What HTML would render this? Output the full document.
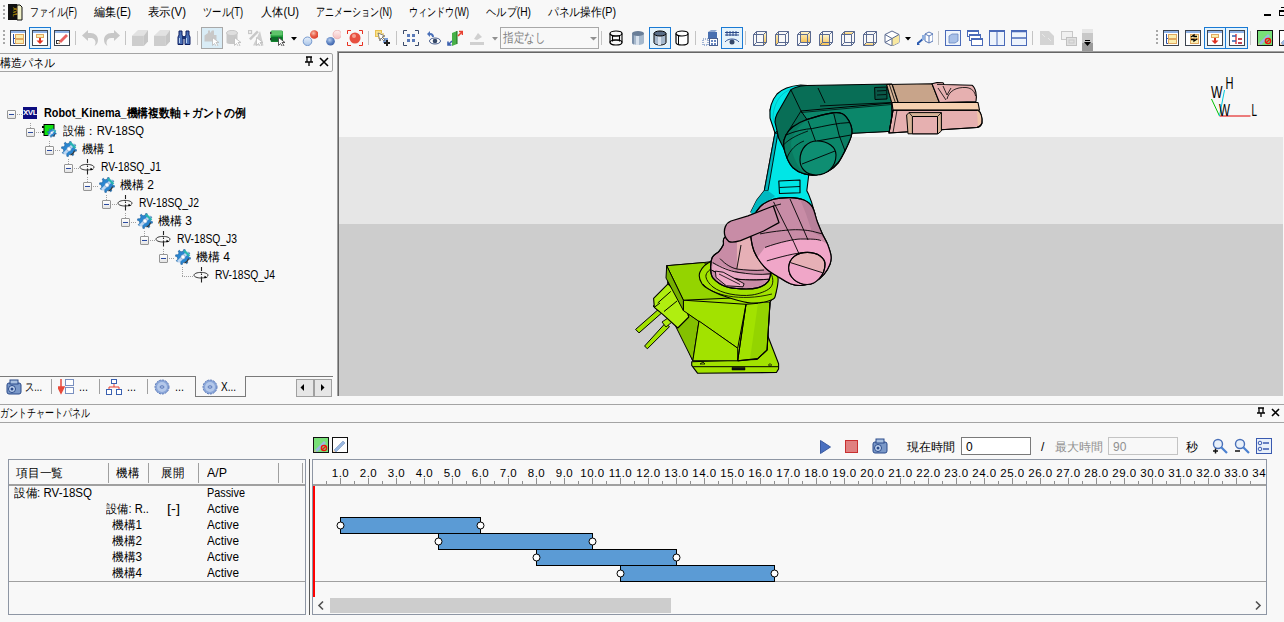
<!DOCTYPE html>
<html><head><meta charset="utf-8"><style>
*{box-sizing:border-box}
html,body{margin:0;padding:0}
body{width:1284px;height:622px;background:#f8f8f8;position:relative;overflow:hidden;font-family:"Liberation Sans",sans-serif;font-size:12px;color:#000}
.a{position:absolute}
.t{position:absolute;white-space:nowrap;line-height:14px;font-size:12px}
.fit{transform-origin:0 50%}
.sep{position:absolute;top:31px;width:1px;height:14px;background:#c4c4c4}
.hl{position:absolute;height:1px;background:#a0a0a0}
.vl{position:absolute;width:1px;background:#a0a0a0}
.dot{position:absolute;width:2px;height:2px;background:#a8a8a8}
</style></head><body>
<div class="dot" style="left:3px;top:5px"></div>
<div class="dot" style="left:3px;top:9px"></div>
<div class="dot" style="left:3px;top:13px"></div>
<div class="dot" style="left:3px;top:17px"></div>
<svg class="a" style="left:8px;top:4px" width="15" height="17" viewBox="0 0 15 17"><rect x="0" y="0" width="9" height="16" fill="#111"/><path d="M9 1h3l2 2v13H9z" fill="#f0f0c8" stroke="#111" stroke-width="1"/><text x="4.5" y="8" font-size="5" fill="#f0c000" font-family="Liberation Sans" transform="rotate(90 4.5 8)" text-anchor="middle">XVL</text></svg>
<span class="t fit" style="left:30px;top:5px;width:47px;">ファイル(F)</span>
<span class="t fit" style="left:94px;top:5px;width:37px;">編集(E)</span>
<span class="t fit" style="left:148px;top:5px;width:38px;">表示(V)</span>
<span class="t fit" style="left:203px;top:5px;width:40px;">ツール(T)</span>
<span class="t fit" style="left:261px;top:5px;width:38px;">人体(U)</span>
<span class="t fit" style="left:316px;top:5px;width:76px;">アニメーション(N)</span>
<span class="t fit" style="left:409px;top:5px;width:60px;">ウィンドウ(W)</span>
<span class="t fit" style="left:486px;top:5px;width:45px;">ヘルプ(H)</span>
<span class="t fit" style="left:548px;top:5px;width:68px;">パネル操作(P)</span>
<div class="a" style="left:1264px;top:14px;width:7px;height:2px;background:#000"></div>
<div class="a" style="left:1279px;top:10px;width:8px;height:6px;border:1.5px solid #000;border-top-width:2px"></div>
<div class="a" style="left:1281px;top:7px;width:6px;height:2px;border-top:1.5px solid #000"></div>
<div class="dot" style="left:3px;top:30px"></div>
<div class="dot" style="left:3px;top:34px"></div>
<div class="dot" style="left:3px;top:38px"></div>
<div class="dot" style="left:3px;top:42px"></div>
<div class="dot" style="left:1156px;top:30px"></div>
<div class="dot" style="left:1156px;top:34px"></div>
<div class="dot" style="left:1156px;top:38px"></div>
<div class="dot" style="left:1156px;top:42px"></div>
<div class="a" style="left:29px;top:27px;width:22px;height:22px;border:1px solid #1a7ad4;background:#e5f3fb"></div>
<div class="a" style="left:201px;top:27px;width:22px;height:22px;border:1px solid #a8a8a8;background:#d9ecf6"></div>
<div class="a" style="left:649px;top:27px;width:22px;height:22px;border:1px solid #1a7ad4;background:#e5f3fb"></div>
<div class="a" style="left:721px;top:27px;width:22px;height:22px;border:1px solid #1a7ad4;background:#e5f3fb"></div>
<div class="a" style="left:1204px;top:27px;width:22px;height:22px;border:1px solid #1a7ad4;background:#e5f3fb"></div>
<div class="a" style="left:1225px;top:27px;width:23px;height:22px;border:1px solid #1a7ad4;background:#e5f3fb"></div>
<div class="sep" style="left:75px"></div>
<div class="sep" style="left:125px"></div>
<div class="sep" style="left:197px"></div>
<div class="sep" style="left:368px"></div>
<div class="sep" style="left:396px"></div>
<div class="sep" style="left:601px"></div>
<div class="sep" style="left:695px"></div>
<div class="sep" style="left:745px"></div>
<div class="sep" style="left:938px"></div>
<div class="sep" style="left:1032px"></div>
<div class="sep" style="left:1250px"></div>
<svg class="a" style="left:10px;top:30px" width="16" height="16" viewBox="0 0 16 16"><rect x="0.5" y="0.5" width="15" height="15" fill="#fff" stroke="#3c4450"/><rect x="1" y="1" width="14" height="2" fill="#8fb2e6"/><path d="M3.5 4v9.5h2M3.5 8.5h2" stroke="#2a4fa0" fill="none"/><rect x="5.5" y="4.5" width="8" height="4" fill="#fbeeb0" stroke="#e0a860"/><rect x="5.5" y="9.5" width="8" height="4" fill="#fbeeb0" stroke="#e0a860"/></svg>
<svg class="a" style="left:32px;top:30px" width="16" height="16" viewBox="0 0 16 16"><rect x="0.5" y="0.5" width="15" height="15" fill="#fff" stroke="#3c4450"/><rect x="1" y="1" width="14" height="2" fill="#8fb2e6"/><rect x="4.5" y="4.5" width="7" height="3" fill="#fbeeb0" stroke="#e0a860"/><path d="M7 8h2v2.5h2.5L8 14 4.5 10.5H7z" fill="#e03020"/></svg>
<svg class="a" style="left:54px;top:30px" width="16" height="16" viewBox="0 0 16 16"><rect x="0.5" y="0.5" width="15" height="15" fill="#fff" stroke="#3c4450"/><rect x="1" y="1" width="14" height="2" fill="#8fb2e6"/><rect x="2.5" y="10.5" width="3" height="3" fill="#fff" stroke="#333"/><path d="M5 11l7-7 2 2-7 7z" fill="#e86060"/><path d="M5 11l-1 3 3-1z" fill="#f0c090"/></svg>
<svg class="a" style="left:82px;top:30px" width="16" height="16" viewBox="0 0 16 16"><path d="M0 5.5L6 0v3h2.5C13 3 16 6 16 10c0 3-1.5 5-3.5 6 .8-1.5 1-2.5 1-3.5 0-2.5-2-4.5-5-4.5H6v3z" fill="#c8c8c8"/></svg>
<svg class="a" style="left:104px;top:30px" width="16" height="16" viewBox="0 0 16 16"><path d="M16 5.5L10 0v3H7.5C3 3 0 6 0 10c0 3 1.5 5 3.5 6-.8-1.5-1-2.5-1-3.5 0-2.5 2-4.5 5-4.5H10v3z" fill="#c8c8c8"/></svg>
<svg class="a" style="left:132px;top:30px" width="16" height="16" viewBox="0 0 16 16"><path d="M0 5.7L6 0h10l-4.2 5.7z" fill="#e2e2e2"/><rect x="0" y="5.7" width="11.8" height="10.3" fill="#cdcdcd"/><path d="M11.8 5.7L16 0v11.5L11.8 16z" fill="#c6c6c6"/></svg>
<svg class="a" style="left:154px;top:30px" width="16" height="16" viewBox="0 0 16 16"><path d="M0 5.7L6 0h10l-4.2 5.7z" fill="#e2e2e2"/><rect x="0" y="5.7" width="11.8" height="10.3" fill="#cdcdcd"/><path d="M11.8 5.7L16 0v11.5L11.8 16z" fill="#c6c6c6"/></svg>
<svg class="a" style="left:176px;top:30px" width="16" height="16" viewBox="0 0 16 16"><path d="M2 14.5V7l1-2V1h3v4l1 2v7.5zM9 14.5V7l1-2V1h3v4l1 2v7.5z" fill="#4a6fb5" stroke="#0e1f60" stroke-width="1"/><rect x="6" y="6" width="4" height="3" fill="#1a3070"/><path d="M3.5 8v5M10.5 8v5" stroke="#b8d0f0"/></svg>
<svg class="a" style="left:204px;top:30px" width="16" height="16" viewBox="0 0 16 16"><path d="M0.5 5.5L4 3V0.5h2V3l2-2.5h2V5h2.5v6.5H.5z" fill="#c8c8c8"/><path d="M8.5 7.5v8l2-2 2 3 1.5-1-2-3h3z" fill="#fff" stroke="#c0c0c0" stroke-width=".9"/></svg>
<svg class="a" style="left:226px;top:30px" width="16" height="16" viewBox="0 0 16 16"><path d="M0.5 3v9.5c0 1 2.5 1.5 5.5 1.5s5.5-.5 5.5-1.5V3" fill="#c8c8c8"/><ellipse cx="6" cy="3" rx="5.5" ry="2.6" fill="#dedede" stroke="#c8c8c8"/><path d="M8.5 7.5v8l2-2 2 3 1.5-1-2-3h3z" fill="#fff" stroke="#c0c0c0" stroke-width=".9"/></svg>
<svg class="a" style="left:248px;top:30px" width="16" height="16" viewBox="0 0 16 16"><rect x="0.5" y="0.5" width="3" height="3" fill="none" stroke="#c8c8c8" stroke-width="1.3"/><path d="M1 8.5L9 .5l1.8 1.8-8 8z" fill="#c8c8c8"/><path d="M5 15.5L12 1l3.5 14.5z" fill="#d0d0d0"/><path d="M8.5 7.5v8l2-2 2 3 1.5-1-2-3h3z" fill="#fff" stroke="#c0c0c0" stroke-width=".9"/></svg>
<svg class="a" style="left:270px;top:30px" width="16" height="16" viewBox="0 0 16 16"><rect x="0.5" y="0.5" width="12.5" height="11.5" rx="1.5" fill="#1e9a38"/><rect x="1" y="1" width="11.5" height="4.5" rx="1" fill="#5ec46a"/><rect x="1" y="7" width="11.5" height="4.5" fill="#0c6e28"/><path d="M0 3h1.5M0 9h1.5" stroke="#333" stroke-width="2"/><path d="M8.5 7.5v8l2-2 2 3 1.5-1-2-3h3z" fill="#fff" stroke="#444" stroke-width=".9"/></svg>
<svg class="a" style="left:302px;top:30px" width="16" height="16" viewBox="0 0 16 16"><defs><radialGradient id="rb" cx=".4" cy=".35" r=".7"><stop offset="0" stop-color="#f8c0b0"/><stop offset=".5" stop-color="#e8604a"/><stop offset="1" stop-color="#d83a2a"/></radialGradient><linearGradient id="bb" x1="0" y1="0" x2="0" y2="1"><stop offset="0" stop-color="#e8f0fa"/><stop offset="1" stop-color="#a8c4e8"/></linearGradient></defs><circle cx="12.3" cy="4.5" r="4.3" fill="url(#rb)"/><circle cx="5.5" cy="11.3" r="4.3" fill="url(#bb)" stroke="#6a90c8" stroke-width=".9"/></svg>
<svg class="a" style="left:325px;top:30px" width="16" height="16" viewBox="0 0 16 16"><defs><radialGradient id="bb2" cx=".4" cy=".35" r=".7"><stop offset="0" stop-color="#b8cff0"/><stop offset=".6" stop-color="#5a80c0"/><stop offset="1" stop-color="#3a5ea8"/></radialGradient><linearGradient id="rr2" x1="0" y1="0" x2="0" y2="1"><stop offset="0" stop-color="#fff0f0"/><stop offset="1" stop-color="#f4c0c0"/></linearGradient></defs><circle cx="12.3" cy="4.5" r="4.3" fill="url(#rr2)" stroke="#e8a8a8" stroke-width=".7"/><circle cx="5.5" cy="11.3" r="4.3" fill="url(#bb2)"/></svg>
<svg class="a" style="left:347px;top:30px" width="16" height="16" viewBox="0 0 16 16"><path d="M.5 4V.5H4M12 .5h3.5V4M15.5 12v3.5H12M4 15.5H.5V12" stroke="#e83020" fill="none"/><circle cx="8" cy="8" r="5.5" fill="#e85040"/><circle cx="7" cy="6" r="2" fill="#f5a090"/></svg>
<svg class="a" style="left:375px;top:30px" width="16" height="16" viewBox="0 0 16 16"><rect x="0.5" y="0.5" width="6" height="6" fill="#f8e08a" stroke="#e8c050"/><rect x="3" y="3" width="6" height="6" fill="#f0d890"/><rect x="8" y="8" width="5" height="5" fill="#7aa0d8"/><path d="M3 3l7 3-3 1 3 3-1 1-3-3-1 3z" fill="#fff" stroke="#555" stroke-width=".7"/><path d="M12 10v6M9 13h6" stroke="#222" stroke-width="2"/></svg>
<svg class="a" style="left:403px;top:30px" width="16" height="16" viewBox="0 0 16 16"><path d="M.5 4V.5H4M12 .5h3.5V4M15.5 12v3.5H12M4 15.5H.5V12" stroke="#3a4a6a" fill="none"/><g fill="#5a7ab8"><rect x="4" y="4" width="3" height="3"/><rect x="9" y="4" width="3" height="3"/><rect x="4" y="9" width="3" height="3"/><rect x="9" y="9" width="3" height="3"/></g></svg>
<svg class="a" style="left:425px;top:30px" width="16" height="16" viewBox="0 0 16 16"><path d="M2 4l3-3v2c3 0 4 2 4 4H7c0-1-.5-2-2-2v2z" fill="#4a70b8"/><ellipse cx="10" cy="11" rx="5.5" ry="3" fill="#fff" stroke="#4a6090"/><circle cx="10" cy="11" r="2.3" fill="#354868"/></svg>
<svg class="a" style="left:447px;top:30px" width="16" height="16" viewBox="0 0 16 16"><path d="M5 3l5-2v13l-5 2z" fill="#48b048"/><path d="M10 1v13" stroke="#1a6a1a"/><path d="M11 6l4-4M12 1.5h3.5V5" stroke="#e84030" stroke-width="1.6" fill="none"/><path d="M1 15l4-4M1 11.5V15h3.5" stroke="#3a60b0" stroke-width="1.6" fill="none"/></svg>
<svg class="a" style="left:469px;top:30px" width="16" height="16" viewBox="0 0 16 16"><path d="M5 9l4-6 4 4-5 3z" fill="#d0d0d0"/><rect x="1" y="12" width="14" height="3" fill="#d0d0d0"/></svg>
<svg class="a" style="left:609px;top:30px" width="16" height="16" viewBox="0 0 16 16"><ellipse cx="7" cy="3.5" rx="6" ry="2.5" fill="none" stroke="#000" stroke-width="1.2"/><ellipse cx="7" cy="12.5" rx="6" ry="2.5" fill="none" stroke="#000" stroke-width="1.2"/><path d="M1 3.5v9M13 3.5v9M3.5 5.5v6M10.5 5.5v6" stroke="#000" stroke-width="1.1"/><path d="M3 6h8M3 10h8" stroke="#000"/></svg>
<svg class="a" style="left:631px;top:30px" width="16" height="16" viewBox="0 0 16 16"><path d="M1 3.5v9c0 1.4 2.7 2.5 6 2.5s6-1.1 6-2.5v-9" fill="#a6b8cc"/><path d="M5 5.5v9.5h3V5.5z" fill="#d8e2ee"/><path d="M1 4v8.5c0 1 .8 1.6 2 2V5z" fill="#7a8ea8"/><ellipse cx="7" cy="3.5" rx="6" ry="2.5" fill="#6a7e98"/></svg>
<svg class="a" style="left:653px;top:30px" width="16" height="16" viewBox="0 0 16 16"><path d="M1 3.5v9c0 1.4 2.7 2.5 6 2.5s6-1.1 6-2.5v-9" fill="#a6b8cc" stroke="#000"/><path d="M5 5.5v9.5h3V5.5z" fill="#d8e2ee"/><ellipse cx="7" cy="3.5" rx="6" ry="2.5" fill="#5a6e88" stroke="#000"/></svg>
<svg class="a" style="left:675px;top:30px" width="16" height="16" viewBox="0 0 16 16"><path d="M1 3.5v9c0 1.4 2.7 2.5 6 2.5s6-1.1 6-2.5v-9" fill="#fff" stroke="#000" stroke-width="1.2"/><ellipse cx="7" cy="3.5" rx="6" ry="2.5" fill="#fff" stroke="#000" stroke-width="1.2"/><path d="M3.5 5.5v9" stroke="#000"/></svg>
<svg class="a" style="left:702px;top:30px" width="16" height="16" viewBox="0 0 16 16"><rect x="6" y="2" width="9" height="7" fill="#4a70b0"/><path d="M6 2l3-2h6l-2 2z" fill="#90a8d0"/><rect x="7.5" y="8.5" width="8" height="7" fill="#fff" stroke="#4a6090"/><path d="M9 10h2v2H9zM12 10h2v2h-2zM9 13h2v2H9zM12 13h2v2h-2z" fill="#6a88c0"/><path d="M1 9h5v6H1z" fill="none" stroke="#4a70b0" stroke-dasharray="1 1"/></svg>
<svg class="a" style="left:724px;top:30px" width="16" height="16" viewBox="0 0 16 16"><path d="M1 2.5h14M1 5h14M3 1v5M6 1v5M9 1v5M12 1v5" stroke="#2a4a8a" stroke-width="1"/><path d="M1 12c3-4 11-4 14 0" fill="none" stroke="#3a5a9a"/><circle cx="8" cy="12" r="2.5" fill="#354868"/></svg>
<svg class="a" style="left:752px;top:30px" width="16" height="16" viewBox="0 0 16 16"><defs><linearGradient id="yg" x1="0" y1="0" x2="0" y2="1"><stop offset="0" stop-color="#fff7d0"/><stop offset="1" stop-color="#f5c050"/></linearGradient></defs><path d="M11.5 4.5l3-3v11l-3 3z" fill="url(#yg)"/><path d="M1.5 4.5l3-3h10v11l-3 3h-10z" fill="none" stroke="#5a6a90"/><path d="M1.5 4.5h10v11M11.5 4.5l3-3" stroke="#5a6a90" fill="none"/><path d="M4.5 1.5v11h10M4.5 12.5l-3 3" stroke="#5a6a90" fill="none"/></svg>
<svg class="a" style="left:774px;top:30px" width="16" height="16" viewBox="0 0 16 16"><defs><linearGradient id="yg" x1="0" y1="0" x2="0" y2="1"><stop offset="0" stop-color="#fff7d0"/><stop offset="1" stop-color="#f5c050"/></linearGradient></defs><path d="M1.5 4.5l3-3v11l-3 3z" fill="url(#yg)"/><path d="M1.5 4.5l3-3h10v11l-3 3h-10z" fill="none" stroke="#5a6a90"/><path d="M1.5 4.5h10v11M11.5 4.5l3-3" stroke="#5a6a90" fill="none"/><path d="M4.5 1.5v11h10M4.5 12.5l-3 3" stroke="#5a6a90" fill="none"/></svg>
<svg class="a" style="left:796px;top:30px" width="16" height="16" viewBox="0 0 16 16"><defs><linearGradient id="yg" x1="0" y1="0" x2="0" y2="1"><stop offset="0" stop-color="#fff7d0"/><stop offset="1" stop-color="#f5c050"/></linearGradient></defs><rect x="4.5" y="1.5" width="10" height="11" fill="url(#yg)"/><path d="M1.5 4.5l3-3h10v11l-3 3h-10z" fill="none" stroke="#5a6a90"/><path d="M1.5 4.5h10v11M11.5 4.5l3-3" stroke="#5a6a90" fill="none"/><path d="M4.5 1.5v11h10M4.5 12.5l-3 3" stroke="#5a6a90" fill="none"/></svg>
<svg class="a" style="left:818px;top:30px" width="16" height="16" viewBox="0 0 16 16"><defs><linearGradient id="yg" x1="0" y1="0" x2="0" y2="1"><stop offset="0" stop-color="#fff7d0"/><stop offset="1" stop-color="#f5c050"/></linearGradient></defs><rect x="1.5" y="4.5" width="10" height="11" fill="url(#yg)"/><path d="M1.5 4.5l3-3h10v11l-3 3h-10z" fill="none" stroke="#5a6a90"/><path d="M1.5 4.5h10v11M11.5 4.5l3-3" stroke="#5a6a90" fill="none"/><path d="M4.5 1.5v11h10M4.5 12.5l-3 3" stroke="#5a6a90" fill="none"/></svg>
<svg class="a" style="left:840px;top:30px" width="16" height="16" viewBox="0 0 16 16"><defs><linearGradient id="yg" x1="0" y1="0" x2="0" y2="1"><stop offset="0" stop-color="#fff7d0"/><stop offset="1" stop-color="#f5c050"/></linearGradient></defs><path d="M1.5 4.5l3-3h10l-3 3z" fill="url(#yg)"/><path d="M1.5 4.5l3-3h10v11l-3 3h-10z" fill="none" stroke="#5a6a90"/><path d="M1.5 4.5h10v11M11.5 4.5l3-3" stroke="#5a6a90" fill="none"/><path d="M4.5 1.5v11h10M4.5 12.5l-3 3" stroke="#5a6a90" fill="none"/></svg>
<svg class="a" style="left:862px;top:30px" width="16" height="16" viewBox="0 0 16 16"><defs><linearGradient id="yg" x1="0" y1="0" x2="0" y2="1"><stop offset="0" stop-color="#fff7d0"/><stop offset="1" stop-color="#f5c050"/></linearGradient></defs><path d="M1.5 15.5l3-3h10l-3 3z" fill="url(#yg)"/><path d="M1.5 4.5l3-3h10v11l-3 3h-10z" fill="none" stroke="#5a6a90"/><path d="M1.5 4.5h10v11M11.5 4.5l3-3" stroke="#5a6a90" fill="none"/><path d="M4.5 1.5v11h10M4.5 12.5l-3 3" stroke="#5a6a90" fill="none"/></svg>
<svg class="a" style="left:884px;top:30px" width="16" height="16" viewBox="0 0 16 16"><path d="M8 1l7 3.5v8L8 16l-7-3.5v-8z" fill="#fff" stroke="#5a6a90"/><path d="M8 8.5l7-4v8L8 16z" fill="#f8e8a0"/><path d="M1 4.5l7 4 7-4M8 8.5V16M1 12.5l7-4" stroke="#5a6a90" fill="none"/></svg>
<svg class="a" style="left:917px;top:30px" width="16" height="16" viewBox="0 0 16 16"><path d="M8 4l4-2 4 2v7l-4 2-4-2z" fill="#fff" stroke="#5a7ab8"/><path d="M8 4l4 2 4-2M12 6v7" stroke="#5a7ab8" fill="none"/><path d="M0 14l7-6" stroke="#2a5ab0" stroke-width="2"/><path d="M3 15h-3v-3z" fill="#2a5ab0"/><rect x="5" y="5" width="3" height="5" fill="#90b0e0"/></svg>
<svg class="a" style="left:945px;top:30px" width="16" height="16" viewBox="0 0 16 16"><rect x="0.5" y="0.5" width="15" height="15" fill="#eef4fc" stroke="#4a6ab8"/><path d="M4 6l3-2h6v7l-3 2H4z" fill="#a8c0e8" stroke="#6a88c0" stroke-width=".8"/></svg>
<svg class="a" style="left:967px;top:30px" width="16" height="16" viewBox="0 0 16 16"><rect x="0.5" y="0.5" width="11" height="6" fill="#fff" stroke="#4a6ab8"/><rect x="2.5" y="4.5" width="11" height="6" fill="#fff" stroke="#4a6ab8"/><rect x="4.5" y="8.5" width="11" height="7" fill="#fff" stroke="#4a6ab8"/><path d="M1 1.5h10M3 5.5h10M5 9.5h10" stroke="#4a6ab8"/></svg>
<svg class="a" style="left:989px;top:30px" width="16" height="16" viewBox="0 0 16 16"><rect x="0.5" y="0.5" width="15" height="15" fill="#eef4fc" stroke="#4a6ab8"/><path d="M8 1v14M1 1.5h14" stroke="#4a6ab8"/></svg>
<svg class="a" style="left:1011px;top:30px" width="16" height="16" viewBox="0 0 16 16"><rect x="0.5" y="0.5" width="15" height="15" fill="#eef4fc" stroke="#4a6ab8"/><path d="M1 1.5h14M1 8h14" stroke="#4a6ab8" stroke-width="1.3"/></svg>
<svg class="a" style="left:1039px;top:30px" width="16" height="16" viewBox="0 0 16 16"><path d="M1 15V1h9l5 5v9z" fill="#d4d4d4"/><path d="M3 4l3 3M9 8l3 3" stroke="#e8e8e8"/></svg>
<svg class="a" style="left:1061px;top:30px" width="16" height="16" viewBox="0 0 16 16"><rect x="0.5" y="1.5" width="11" height="8" fill="#f0f0f0" stroke="#c8c8c8"/><rect x="5.5" y="7.5" width="10" height="8" fill="#e0e0e0" stroke="#c0c0c0"/><rect x="8" y="10" width="5" height="3" fill="none" stroke="#c8c8c8"/></svg>
<svg class="a" style="left:1163px;top:30px" width="16" height="16" viewBox="0 0 16 16"><rect x="0.5" y="0.5" width="15" height="15" fill="#fff" stroke="#3c4450"/><rect x="1" y="1" width="14" height="2" fill="#8fb2e6"/><path d="M3.5 4v9.5h2M3.5 8.5h2" stroke="#2a4fa0" fill="none"/><rect x="5.5" y="4.5" width="8" height="4" fill="#fbeeb0" stroke="#e0a860"/><rect x="5.5" y="9.5" width="8" height="4" fill="#fbeeb0" stroke="#e0a860"/></svg>
<svg class="a" style="left:1185px;top:30px" width="16" height="16" viewBox="0 0 16 16"><rect x="0.5" y="0.5" width="15" height="15" fill="#fff" stroke="#3c4450"/><rect x="1" y="1" width="14" height="2" fill="#8fb2e6"/><rect x="5.5" y="4.5" width="8" height="4" fill="#fbeeb0" stroke="#e0a860"/><rect x="5.5" y="9.5" width="8" height="4" fill="#fbeeb0" stroke="#e0a860"/><path d="M6 7l3-2v1.5h3M12 9l-3 2v-1.5H6" stroke="#000" stroke-width="1.3" fill="none"/></svg>
<svg class="a" style="left:1207px;top:30px" width="16" height="16" viewBox="0 0 16 16"><rect x="0.5" y="0.5" width="15" height="15" fill="#fff" stroke="#3c4450"/><rect x="1" y="1" width="14" height="2" fill="#8fb2e6"/><rect x="4.5" y="4.5" width="7" height="3" fill="#fbeeb0" stroke="#e0a860"/><path d="M7 8h2v2.5h2.5L8 14 4.5 10.5H7z" fill="#e03020"/></svg>
<svg class="a" style="left:1229px;top:30px" width="16" height="16" viewBox="0 0 16 16"><rect x="0.5" y="0.5" width="15" height="15" fill="#fff" stroke="#3c4450"/><rect x="1" y="1" width="14" height="2" fill="#8fb2e6"/><path d="M7 4v10" stroke="#e02020" stroke-width="1.3"/><path d="M3 6h4M9 9h4M3 11h4M9 13h4" stroke="#3060b0" stroke-width="1.3"/><path d="M9 9h4M9 13h4" stroke="#e03030" stroke-width="1.3"/></svg>
<svg class="a" style="left:1257px;top:30px" width="16" height="16" viewBox="0 0 16 16"><rect x="0.5" y="0.5" width="15" height="15" fill="#78e078" stroke="#111"/><path d="M2 13l9-9 2 2-9 9z" fill="#9ab8e0"/><path d="M2 13l-1 2 2-.5z" fill="#f0c090"/><circle cx="11" cy="11" r="2.6" fill="none" stroke="#f01010" stroke-width="1.4"/><path d="M9 13l4-4" stroke="#f01010" stroke-width="1.2"/></svg>
<svg class="a" style="left:1279px;top:30px" width="16" height="16" viewBox="0 0 16 16"><rect x="0.5" y="0.5" width="15" height="15" fill="#fff" stroke="#111"/><path d="M2 13l9-9 2 2-9 9z" fill="#9ab8e0" stroke="#6a88b8" stroke-width=".5"/><path d="M2 13l-1 2 2-.5z" fill="#f0c090"/></svg>
<svg class="a" style="left:291px;top:37px" width="6" height="4"><path d="M0 0h6L3 3.5z" fill="#000"/></svg>
<svg class="a" style="left:492px;top:37px" width="6" height="4"><path d="M0 0h6L3 3.5z" fill="#909090"/></svg>
<svg class="a" style="left:905px;top:37px" width="6" height="4"><path d="M0 0h6L3 3.5z" fill="#000"/></svg>
<div class="a" style="left:500px;top:27px;width:99px;height:22px;border:1px solid #a8a8a8;background:#f8f8f8"></div>
<span class="t fit" style="left:503px;top:31px;color:#808080;font-size:13px;width:42px;">指定なし</span>
<svg class="a" style="left:590px;top:37px" width="7" height="4"><path d="M0 0h7L3.5 3.5z" fill="#909090"/></svg>
<div class="a" style="left:1082px;top:29px;width:11px;height:22px;background:linear-gradient(#e6e6e6 0,#e6e6e6 4px,#c8c8c8 4px,#c8c8c8 14px,#9a9a9a 14px)"></div>
<svg class="a" style="left:1084px;top:40px" width="7" height="7"><path d="M1 .5h5" stroke="#000"/><path d="M0 2h7L3.5 6z" fill="#000"/></svg>
<div class="a" style="left:-2px;top:53px;width:335px;height:19px;border:1px solid #a4a4a4;border-radius:0 2px 2px 0"></div>
<span class="t fit" style="left:0px;top:56px;width:55px;">構造パネル</span>
<svg class="a" style="left:304px;top:56px" width="10" height="11" viewBox="0 0 10 11"><path d="M2 1h6M3 1v5h4V1M1 6h8M5 6v4" stroke="#000" stroke-width="1.3" fill="none"/></svg>
<svg class="a" style="left:319px;top:57px" width="10" height="10" viewBox="0 0 10 10"><path d="M1 1l8 8M9 1l-8 8" stroke="#000" stroke-width="1.6"/></svg>
<div class="a" style="left:7px;top:110px;width:9px;height:9px;border:1px solid #959595;border-radius:1px;background:linear-gradient(#fff,#e4e4e4)"></div>
<div class="a" style="left:9px;top:114px;width:5px;height:1px;background:#2a4aa0"></div>
<div class="a" style="left:17px;top:114px;width:5px;height:1px;background:repeating-linear-gradient(90deg,#a0a0a0 0 1px,transparent 1px 2px)"></div>
<div class="a" style="left:23px;top:107px;width:14px;height:12px;background:#0c0c80;color:#fff;font-size:8px;line-height:12px;text-align:center;font-weight:bold;letter-spacing:-.5px">XVL</div>
<span class="t fit" style="left:44px;top:106px;font-weight:bold;width:202px;">Robot_Kinema_機構複数軸＋ガントの例</span>
<div class="a" style="left:26px;top:128px;width:9px;height:9px;border:1px solid #959595;border-radius:1px;background:linear-gradient(#fff,#e4e4e4)"></div>
<div class="a" style="left:28px;top:132px;width:5px;height:1px;background:#2a4aa0"></div>
<div class="a" style="left:36px;top:132px;width:5px;height:1px;background:repeating-linear-gradient(90deg,#a0a0a0 0 1px,transparent 1px 2px)"></div>
<div class="a" style="left:30px;top:123px;width:1px;height:5px;background:repeating-linear-gradient(#a0a0a0 0 1px,transparent 1px 2px)"></div>
<svg class="a" style="left:42px;top:124px" width="15" height="14" viewBox="0 0 15 14"><rect x="2" y="0.5" width="10" height="11" fill="#10e010" stroke="#000"/><path d="M0 3h2M0 8h2" stroke="#000" stroke-width="2"/><g transform="translate(5 4) scale(.6)"><path d="M13.60,8.00 L15.57,8.72 L15.26,10.23 L13.17,10.14 L11.96,11.96 L12.84,13.86 L11.56,14.72 L10.14,13.17 L8.00,13.60 L7.28,15.57 L5.77,15.26 L5.86,13.17 L4.04,11.96 L2.14,12.84 L1.28,11.56 L2.83,10.14 L2.40,8.00 L0.43,7.28 L0.74,5.77 L2.83,5.86 L4.04,4.04 L3.16,2.14 L4.44,1.28 L5.86,2.83 L8.00,2.40 L8.72,0.43 L10.23,0.74 L10.14,2.83 L11.96,4.04 L13.86,3.16 L14.72,4.44 L13.17,5.86Z" fill="#2a86d0" stroke="#1a5a98" stroke-width=".6"/><path d="M3 13L13 3" stroke="#bcd6f2" stroke-width="3"/><path d="M9 1.5l5.5 5.5" stroke="#28b4b0" stroke-width="2.2"/><circle cx="8" cy="8" r="2.2" fill="#fff" stroke="#5a8ac0" stroke-width=".6"/><path d="M13.5 9.5a6 6 0 0 1-4 4.5" stroke="#333" stroke-width="1.2" fill="none"/></g></svg>
<span class="t fit" style="left:63px;top:124px;width:81px;">設備：RV-18SQ</span>
<div class="a" style="left:45px;top:146px;width:9px;height:9px;border:1px solid #959595;border-radius:1px;background:linear-gradient(#fff,#e4e4e4)"></div>
<div class="a" style="left:47px;top:150px;width:5px;height:1px;background:#2a4aa0"></div>
<div class="a" style="left:55px;top:150px;width:5px;height:1px;background:repeating-linear-gradient(90deg,#a0a0a0 0 1px,transparent 1px 2px)"></div>
<div class="a" style="left:49px;top:141px;width:1px;height:5px;background:repeating-linear-gradient(#a0a0a0 0 1px,transparent 1px 2px)"></div>
<svg class="a" style="left:61px;top:141px" width="16" height="16" viewBox="0 0 16 16"><path d="M13.60,8.00 L15.57,8.72 L15.26,10.23 L13.17,10.14 L11.96,11.96 L12.84,13.86 L11.56,14.72 L10.14,13.17 L8.00,13.60 L7.28,15.57 L5.77,15.26 L5.86,13.17 L4.04,11.96 L2.14,12.84 L1.28,11.56 L2.83,10.14 L2.40,8.00 L0.43,7.28 L0.74,5.77 L2.83,5.86 L4.04,4.04 L3.16,2.14 L4.44,1.28 L5.86,2.83 L8.00,2.40 L8.72,0.43 L10.23,0.74 L10.14,2.83 L11.96,4.04 L13.86,3.16 L14.72,4.44 L13.17,5.86Z" fill="#2a86d0" stroke="#1a5a98" stroke-width=".6"/><path d="M3 13L13 3" stroke="#bcd6f2" stroke-width="3"/><path d="M9 1.5l5.5 5.5" stroke="#28b4b0" stroke-width="2.2"/><circle cx="8" cy="8" r="2.2" fill="#fff" stroke="#5a8ac0" stroke-width=".6"/><path d="M13.5 9.5a6 6 0 0 1-4 4.5" stroke="#333" stroke-width="1.2" fill="none"/></svg>
<span class="t fit" style="left:82px;top:142px;width:32px;">機構 1</span>
<div class="a" style="left:64px;top:164px;width:9px;height:9px;border:1px solid #959595;border-radius:1px;background:linear-gradient(#fff,#e4e4e4)"></div>
<div class="a" style="left:66px;top:168px;width:5px;height:1px;background:#2a4aa0"></div>
<div class="a" style="left:74px;top:168px;width:5px;height:1px;background:repeating-linear-gradient(90deg,#a0a0a0 0 1px,transparent 1px 2px)"></div>
<div class="a" style="left:68px;top:159px;width:1px;height:5px;background:repeating-linear-gradient(#a0a0a0 0 1px,transparent 1px 2px)"></div>
<svg class="a" style="left:79px;top:159px" width="17" height="16" viewBox="0 0 17 16"><path d="M8.5 0v4M8.5 6.5v1.5M8.5 9.5v6" stroke="#222" stroke-width="1.1"/><path d="M12.5 10.3C11 10.8 9.8 11 8 11 4.2 11 1 9.8 1 8.2s3.2-2.8 7-2.8 7 1.2 7 2.8c0 .6-.4 1-1 1.4" fill="none" stroke="#333" stroke-width="1"/><path d="M11.5 8.8l3 1.6-3 1.2z" fill="#000"/></svg>
<span class="t fit" style="left:101px;top:160px;width:60px;">RV-18SQ_J1</span>
<div class="a" style="left:83px;top:182px;width:9px;height:9px;border:1px solid #959595;border-radius:1px;background:linear-gradient(#fff,#e4e4e4)"></div>
<div class="a" style="left:85px;top:186px;width:5px;height:1px;background:#2a4aa0"></div>
<div class="a" style="left:93px;top:186px;width:5px;height:1px;background:repeating-linear-gradient(90deg,#a0a0a0 0 1px,transparent 1px 2px)"></div>
<div class="a" style="left:87px;top:177px;width:1px;height:5px;background:repeating-linear-gradient(#a0a0a0 0 1px,transparent 1px 2px)"></div>
<svg class="a" style="left:99px;top:177px" width="16" height="16" viewBox="0 0 16 16"><path d="M13.60,8.00 L15.57,8.72 L15.26,10.23 L13.17,10.14 L11.96,11.96 L12.84,13.86 L11.56,14.72 L10.14,13.17 L8.00,13.60 L7.28,15.57 L5.77,15.26 L5.86,13.17 L4.04,11.96 L2.14,12.84 L1.28,11.56 L2.83,10.14 L2.40,8.00 L0.43,7.28 L0.74,5.77 L2.83,5.86 L4.04,4.04 L3.16,2.14 L4.44,1.28 L5.86,2.83 L8.00,2.40 L8.72,0.43 L10.23,0.74 L10.14,2.83 L11.96,4.04 L13.86,3.16 L14.72,4.44 L13.17,5.86Z" fill="#2a86d0" stroke="#1a5a98" stroke-width=".6"/><path d="M3 13L13 3" stroke="#bcd6f2" stroke-width="3"/><path d="M9 1.5l5.5 5.5" stroke="#28b4b0" stroke-width="2.2"/><circle cx="8" cy="8" r="2.2" fill="#fff" stroke="#5a8ac0" stroke-width=".6"/><path d="M13.5 9.5a6 6 0 0 1-4 4.5" stroke="#333" stroke-width="1.2" fill="none"/></svg>
<span class="t fit" style="left:120px;top:178px;width:34px;">機構 2</span>
<div class="a" style="left:102px;top:200px;width:9px;height:9px;border:1px solid #959595;border-radius:1px;background:linear-gradient(#fff,#e4e4e4)"></div>
<div class="a" style="left:104px;top:204px;width:5px;height:1px;background:#2a4aa0"></div>
<div class="a" style="left:112px;top:204px;width:5px;height:1px;background:repeating-linear-gradient(90deg,#a0a0a0 0 1px,transparent 1px 2px)"></div>
<div class="a" style="left:106px;top:195px;width:1px;height:5px;background:repeating-linear-gradient(#a0a0a0 0 1px,transparent 1px 2px)"></div>
<svg class="a" style="left:117px;top:195px" width="17" height="16" viewBox="0 0 17 16"><path d="M8.5 0v4M8.5 6.5v1.5M8.5 9.5v6" stroke="#222" stroke-width="1.1"/><path d="M12.5 10.3C11 10.8 9.8 11 8 11 4.2 11 1 9.8 1 8.2s3.2-2.8 7-2.8 7 1.2 7 2.8c0 .6-.4 1-1 1.4" fill="none" stroke="#333" stroke-width="1"/><path d="M11.5 8.8l3 1.6-3 1.2z" fill="#000"/></svg>
<span class="t fit" style="left:139px;top:196px;width:60px;">RV-18SQ_J2</span>
<div class="a" style="left:121px;top:218px;width:9px;height:9px;border:1px solid #959595;border-radius:1px;background:linear-gradient(#fff,#e4e4e4)"></div>
<div class="a" style="left:123px;top:222px;width:5px;height:1px;background:#2a4aa0"></div>
<div class="a" style="left:131px;top:222px;width:5px;height:1px;background:repeating-linear-gradient(90deg,#a0a0a0 0 1px,transparent 1px 2px)"></div>
<div class="a" style="left:125px;top:213px;width:1px;height:5px;background:repeating-linear-gradient(#a0a0a0 0 1px,transparent 1px 2px)"></div>
<svg class="a" style="left:137px;top:213px" width="16" height="16" viewBox="0 0 16 16"><path d="M13.60,8.00 L15.57,8.72 L15.26,10.23 L13.17,10.14 L11.96,11.96 L12.84,13.86 L11.56,14.72 L10.14,13.17 L8.00,13.60 L7.28,15.57 L5.77,15.26 L5.86,13.17 L4.04,11.96 L2.14,12.84 L1.28,11.56 L2.83,10.14 L2.40,8.00 L0.43,7.28 L0.74,5.77 L2.83,5.86 L4.04,4.04 L3.16,2.14 L4.44,1.28 L5.86,2.83 L8.00,2.40 L8.72,0.43 L10.23,0.74 L10.14,2.83 L11.96,4.04 L13.86,3.16 L14.72,4.44 L13.17,5.86Z" fill="#2a86d0" stroke="#1a5a98" stroke-width=".6"/><path d="M3 13L13 3" stroke="#bcd6f2" stroke-width="3"/><path d="M9 1.5l5.5 5.5" stroke="#28b4b0" stroke-width="2.2"/><circle cx="8" cy="8" r="2.2" fill="#fff" stroke="#5a8ac0" stroke-width=".6"/><path d="M13.5 9.5a6 6 0 0 1-4 4.5" stroke="#333" stroke-width="1.2" fill="none"/></svg>
<span class="t fit" style="left:158px;top:214px;width:34px;">機構 3</span>
<div class="a" style="left:140px;top:236px;width:9px;height:9px;border:1px solid #959595;border-radius:1px;background:linear-gradient(#fff,#e4e4e4)"></div>
<div class="a" style="left:142px;top:240px;width:5px;height:1px;background:#2a4aa0"></div>
<div class="a" style="left:150px;top:240px;width:5px;height:1px;background:repeating-linear-gradient(90deg,#a0a0a0 0 1px,transparent 1px 2px)"></div>
<div class="a" style="left:144px;top:231px;width:1px;height:5px;background:repeating-linear-gradient(#a0a0a0 0 1px,transparent 1px 2px)"></div>
<svg class="a" style="left:155px;top:231px" width="17" height="16" viewBox="0 0 17 16"><path d="M8.5 0v4M8.5 6.5v1.5M8.5 9.5v6" stroke="#222" stroke-width="1.1"/><path d="M12.5 10.3C11 10.8 9.8 11 8 11 4.2 11 1 9.8 1 8.2s3.2-2.8 7-2.8 7 1.2 7 2.8c0 .6-.4 1-1 1.4" fill="none" stroke="#333" stroke-width="1"/><path d="M11.5 8.8l3 1.6-3 1.2z" fill="#000"/></svg>
<span class="t fit" style="left:177px;top:232px;width:60px;">RV-18SQ_J3</span>
<div class="a" style="left:159px;top:254px;width:9px;height:9px;border:1px solid #959595;border-radius:1px;background:linear-gradient(#fff,#e4e4e4)"></div>
<div class="a" style="left:161px;top:258px;width:5px;height:1px;background:#2a4aa0"></div>
<div class="a" style="left:169px;top:258px;width:5px;height:1px;background:repeating-linear-gradient(90deg,#a0a0a0 0 1px,transparent 1px 2px)"></div>
<div class="a" style="left:163px;top:249px;width:1px;height:5px;background:repeating-linear-gradient(#a0a0a0 0 1px,transparent 1px 2px)"></div>
<svg class="a" style="left:175px;top:249px" width="16" height="16" viewBox="0 0 16 16"><path d="M13.60,8.00 L15.57,8.72 L15.26,10.23 L13.17,10.14 L11.96,11.96 L12.84,13.86 L11.56,14.72 L10.14,13.17 L8.00,13.60 L7.28,15.57 L5.77,15.26 L5.86,13.17 L4.04,11.96 L2.14,12.84 L1.28,11.56 L2.83,10.14 L2.40,8.00 L0.43,7.28 L0.74,5.77 L2.83,5.86 L4.04,4.04 L3.16,2.14 L4.44,1.28 L5.86,2.83 L8.00,2.40 L8.72,0.43 L10.23,0.74 L10.14,2.83 L11.96,4.04 L13.86,3.16 L14.72,4.44 L13.17,5.86Z" fill="#2a86d0" stroke="#1a5a98" stroke-width=".6"/><path d="M3 13L13 3" stroke="#bcd6f2" stroke-width="3"/><path d="M9 1.5l5.5 5.5" stroke="#28b4b0" stroke-width="2.2"/><circle cx="8" cy="8" r="2.2" fill="#fff" stroke="#5a8ac0" stroke-width=".6"/><path d="M13.5 9.5a6 6 0 0 1-4 4.5" stroke="#333" stroke-width="1.2" fill="none"/></svg>
<span class="t fit" style="left:196px;top:250px;width:34px;">機構 4</span>
<div class="a" style="left:182px;top:276px;width:12px;height:1px;background:repeating-linear-gradient(90deg,#a0a0a0 0 1px,transparent 1px 2px)"></div>
<div class="a" style="left:182px;top:267px;width:1px;height:9px;background:repeating-linear-gradient(#a0a0a0 0 1px,transparent 1px 2px)"></div>
<svg class="a" style="left:193px;top:267px" width="17" height="16" viewBox="0 0 17 16"><path d="M8.5 0v4M8.5 6.5v1.5M8.5 9.5v6" stroke="#222" stroke-width="1.1"/><path d="M12.5 10.3C11 10.8 9.8 11 8 11 4.2 11 1 9.8 1 8.2s3.2-2.8 7-2.8 7 1.2 7 2.8c0 .6-.4 1-1 1.4" fill="none" stroke="#333" stroke-width="1"/><path d="M11.5 8.8l3 1.6-3 1.2z" fill="#000"/></svg>
<span class="t fit" style="left:215px;top:268px;width:60px;">RV-18SQ_J4</span>
<div class="hl" style="left:0;top:376px;width:195px;background:#7a7a7a"></div>
<div class="hl" style="left:245px;top:376px;width:88px;background:#7a7a7a"></div>
<div class="a" style="left:195px;top:376px;width:51px;height:21px;border:1px solid #7a7a7a;border-top:none;background:#f8f8f8"></div>
<div class="vl" style="left:51px;top:379px;height:15px;background:#a0a0a0"></div>
<div class="vl" style="left:99px;top:379px;height:15px;background:#a0a0a0"></div>
<div class="vl" style="left:147px;top:379px;height:15px;background:#a0a0a0"></div>
<svg class="a" style="left:6px;top:379px" width="16" height="16" viewBox="0 0 16 16"><rect x="1" y="4" width="14" height="11" rx="2" fill="#7a98c8" stroke="#2a4a8a"/><rect x="4" y="1" width="8" height="4" fill="#a8c0e0" stroke="#2a4a8a"/><circle cx="6" cy="10" r="3.5" fill="#c0d4f0" stroke="#2a4a8a"/><circle cx="6" cy="10" r="1.5" fill="#2a4a8a"/></svg>
<span class="t fit" style="left:25px;top:380px;width:17px;">ス...</span>
<svg class="a" style="left:58px;top:379px" width="16" height="16" viewBox="0 0 16 16"><path d="M3 0v11M0 8l3 6 3-6z" stroke="#e84a3a" fill="#e84a3a" stroke-width="1.5"/><rect x="7.5" y="0.5" width="8" height="6" fill="#fff" stroke="#7a90c0"/><rect x="7.5" y="8.5" width="8" height="6" fill="#fff" stroke="#7a90c0"/></svg>
<span class="t fit" style="left:79px;top:380px;width:9px;">...</span>
<svg class="a" style="left:106px;top:379px" width="16" height="16" viewBox="0 0 16 16"><rect x="5.5" y="0.5" width="5" height="4" fill="#fff" stroke="#3a60b0"/><path d="M8 5v3M3 10V8h10v2" stroke="#e84030" fill="none"/><rect x="0.5" y="10.5" width="5" height="5" fill="#fff" stroke="#3a60b0"/><rect x="10.5" y="10.5" width="5" height="5" fill="#fff" stroke="#3a60b0"/></svg>
<span class="t fit" style="left:127px;top:380px;width:9px;">...</span>
<svg class="a" style="left:154px;top:379px" width="16" height="16" viewBox="0 0 16 16"><circle cx="8" cy="8" r="7" fill="#8aa6d8" stroke="#5a78b8" stroke-dasharray="2 1"/><circle cx="8" cy="8" r="5" fill="#b4c8ea"/><ellipse cx="8" cy="8" rx="2" ry="1.2" fill="none" stroke="#5a78b8"/></svg>
<span class="t fit" style="left:175px;top:380px;width:9px;">...</span>
<svg class="a" style="left:202px;top:379px" width="16" height="16" viewBox="0 0 16 16"><circle cx="8" cy="8" r="7" fill="#8aa6d8" stroke="#5a78b8" stroke-dasharray="2 1"/><circle cx="8" cy="8" r="5" fill="#b4c8ea"/><ellipse cx="8" cy="8" rx="2" ry="1.2" fill="none" stroke="#5a78b8"/></svg>
<span class="t fit" style="left:221px;top:380px;width:15px;">X...</span>
<div class="a" style="left:296px;top:379px;width:18px;height:18px;border:1px solid #a0a0a0;background:#e6e6e6"></div>
<svg class="a" style="left:297px;top:379px" width="16" height="16" viewBox="0 0 16 16"><path d="M7 5v7l-3.5-3.5z" fill="#000"/></svg>
<div class="a" style="left:314px;top:379px;width:18px;height:18px;border:1px solid #a0a0a0;background:#e6e6e6"></div>
<svg class="a" style="left:315px;top:379px" width="16" height="16" viewBox="0 0 16 16"><path d="M6 5v7l3.5-3.5z" fill="#000"/></svg>
<div class="a" style="left:337px;top:51px;width:947px;height:345px;background:#f7f7f7"></div>
<div class="a" style="left:337px;top:51px;width:947px;height:1px;background:#a0a0a0"></div>
<div class="a" style="left:337px;top:51px;width:1px;height:345px;background:#a0a0a0"></div>
<div class="a" style="left:338px;top:52px;width:946px;height:1px;background:#666"></div>
<div class="a" style="left:338px;top:52px;width:1px;height:344px;background:#666"></div>
<div class="a" style="left:339px;top:137px;width:944px;height:87px;background:#e6e6e6"></div>
<div class="a" style="left:339px;top:224px;width:944px;height:172px;background:#cdcdcd"></div>
<svg class="a" style="left:0;top:0" width="1284" height="622"><defs><clipPath id="vc"><rect x="339" y="53" width="944" height="343"/></clipPath></defs><g clip-path="url(#vc)"><polygon points="691.7,361.7 756.9,359.5 766.3,332 778.6,363.8 778.6,368.9 776.4,372.5 697.5,373.2 691.7,365.3" fill="#a2e200" stroke="#000" stroke-width="1.1" stroke-linejoin="round"/><polyline points="693.2,366.7 778.6,366.7" fill="none" stroke="#000" stroke-width="1.0" stroke-linejoin="round"/><polygon points="732,367.4 745,367.4 745,370 732,370" fill="#111" stroke="#000" stroke-width="0.5" stroke-linejoin="round"/><path d="M700,364 l3,-2 l2,2z M770,364 a1.5,1 0 1,0 0.1,0" fill="none" stroke="#000" stroke-width="0.8" stroke-linejoin="round"/><polygon points="666.7,265.7 704.3,262.5 740,258 777,275 775.7,292.9 770,302.3 767,350 757.6,358.7 692.8,360.8 676,321 668,285" fill="#a2e200" stroke="#000" stroke-width="1.1" stroke-linejoin="round"/><polygon points="668,282 683.4,310.6 699,321 692.8,360.8 676,327" fill="#84c000" stroke="#000" stroke-width="1.0" stroke-linejoin="round"/><polygon points="635.6,329.4 657.7,310 661.9,312.8 639,332.9" fill="#a2e200" stroke="#000" stroke-width="1.0" stroke-linejoin="round"/><polygon points="644.6,346 665.3,323.2 669.5,326.7 647.3,348.8" fill="#a2e200" stroke="#000" stroke-width="1.0" stroke-linejoin="round"/><polygon points="653,306 659,302 664,306 658,311" fill="#b0ee10" stroke="#000" stroke-width="0.9" stroke-linejoin="round"/><polygon points="662,322 668,318 672,322 666,327" fill="#b0ee10" stroke="#000" stroke-width="0.9" stroke-linejoin="round"/><polygon points="653.6,298.3 668,283.8 683.3,299.7 688.8,317 677.8,328 662.5,314.2 654.3,307.3" fill="#b0ee10" stroke="#000" stroke-width="1.1" stroke-linejoin="round"/><polyline points="657.7,303 670.8,291.4" fill="none" stroke="#000" stroke-width="1.0" stroke-linejoin="round"/><polyline points="664,311.5 677,301" fill="none" stroke="#000" stroke-width="1.0" stroke-linejoin="round"/><polyline points="654.3,307.3 660,303" fill="none" stroke="#000" stroke-width="1.0" stroke-linejoin="round"/><polygon points="746,304.3 770,302.3 767,350 757.6,358.7 737.7,360.8" fill="#a2e200" stroke="#000" stroke-width="1.0" stroke-linejoin="round"/><polygon points="758,303 769,302.5 766,350 757,358 750,359" fill="#94d400" stroke="#000" stroke-width="0" stroke-linejoin="round"/><polyline points="770,302.3 767,350 757.6,358.7 737.7,360.8" fill="none" stroke="#000" stroke-width="1.2" stroke-linejoin="round"/><polygon points="683.4,300.2 746,304.3 737.7,348.2 683.4,310.6" fill="#a2e200" stroke="#000" stroke-width="1.0" stroke-linejoin="round"/><polygon points="699,321 737.7,348.2 737.7,360.8 692.8,360.8" fill="#a2e200" stroke="#000" stroke-width="1.0" stroke-linejoin="round"/><polyline points="746,304.3 737.7,360.8" fill="none" stroke="#000" stroke-width="1.0" stroke-linejoin="round"/><polygon points="666.7,265.7 704.3,262.5 732.5,298 683.4,300.2" fill="#94d400" stroke="#000" stroke-width="1.0" stroke-linejoin="round"/><polygon points="666.7,265.7 683.4,300.2 683.4,310.6 666,278" fill="#76b000" stroke="#000" stroke-width="1.0" stroke-linejoin="round"/><path d="M700,272 C701.7,268.2 705.7,263.5 712,261 C718.3,258.5 729.2,256.8 738,257 C746.8,257.2 758.4,259.0 765,262 C771.6,265.0 775.7,269.9 777.5,275 C779.3,280.1 777.0,288.7 776,292.9 C775.0,297.1 775.5,298.3 771.3,300 C767.1,301.7 757.9,303.3 751,303 C744.1,302.7 736.3,300.0 729.8,298 C723.3,296.0 716.6,293.4 712,291 C707.4,288.6 704.0,286.9 702,283.7 C700.0,280.5 698.3,275.8 700,272Z" fill="#a2e200" stroke="#000" stroke-width="1.1" stroke-linejoin="round"/><path d="M706,275 C706.8,271.3 712.3,267.3 718,265 C723.7,262.7 732.7,261.0 740,261 C747.3,261.0 756.7,262.5 762,265 C767.3,267.5 770.7,272.2 772,276 C773.3,279.8 773.3,284.8 770,288 C766.7,291.2 758.7,294.0 752,295 C745.3,296.0 736.5,295.3 730,294 C723.5,292.7 717.0,290.2 713,287 C709.0,283.8 705.2,278.7 706,275Z" fill="#a2e200" stroke="#000" stroke-width="0.9" stroke-linejoin="round"/><path d="M703,284 C712,295 740,302 772,294" fill="none" stroke="#000" stroke-width="0.8" stroke-linejoin="round"/><path d="M727,236 C720.9,238.2 724.5,242.4 723.2,245 C721.9,247.6 720.8,249.2 719,251.3 C717.2,253.4 713.6,254.6 712.2,257.5 C710.8,260.4 710.5,265.5 710.7,269 C710.9,272.5 710.7,275.4 713.3,278.4 C715.9,281.4 721.5,285.1 726.3,286.8 C731.1,288.6 736.8,288.7 742,288.9 C747.2,289.1 753.4,289.0 757.7,287.8 C762.1,286.6 765.9,284.2 768.1,281.6 C770.3,279.0 769.7,277.3 771,272 C772.3,266.7 777.8,256.7 776,250 C774.2,243.3 768.2,234.3 760,232 C751.8,229.7 733.1,233.8 727,236Z" fill="#c88ca6" stroke="#000" stroke-width="1.1" stroke-linejoin="round"/><polygon points="737,240 762,236 764,270 736.8,269" fill="#e6b0b6" stroke="#000" stroke-width="0" stroke-linejoin="round"/><path d="M720,258.6 C726,265 732,268 736.8,269 C745,270 755,271 764,270" fill="none" stroke="#000" stroke-width="0.9" stroke-linejoin="round"/><path d="M712.8,262.8 C722,268 730,271 736.8,272.2 C748,274 760,275 770,274" fill="none" stroke="#000" stroke-width="0.9" stroke-linejoin="round"/><path d="M711.5,270 C722,276 732,279 742,279.5 C752,280 762,280 769,279" fill="none" stroke="#000" stroke-width="0.9" stroke-linejoin="round"/><polygon points="713,262.8 737,272.2 770,274 769,279 742,279.5 711.5,270" fill="#e8a8c4" stroke="#000" stroke-width="0" stroke-linejoin="round"/><path d="M712.8,262.8 C722,268 730,271 736.8,272.2 C748,274 760,275 770,274" fill="none" stroke="#000" stroke-width="0.9" stroke-linejoin="round"/><path d="M711.5,270 C722,276 732,279 742,279.5 C752,280 762,280 769,279" fill="none" stroke="#000" stroke-width="0.9" stroke-linejoin="round"/><polyline points="741,245 736.8,269" fill="none" stroke="#000" stroke-width="0.9" stroke-linejoin="round"/><polygon points="715.4,271.1 723.2,272.2 744.1,283.7 743,286.8 726.3,285.8 716,277.4" fill="#eeaac6" stroke="#000" stroke-width="0.9" stroke-linejoin="round"/><polyline points="719,274 740,284.5" fill="none" stroke="#000" stroke-width="0.8" stroke-linejoin="round"/><path d="M727,236 C720.9,238.2 724.5,242.4 723.2,245 C721.9,247.6 720.8,249.2 719,251.3 C717.2,253.4 713.6,254.6 712.2,257.5 C710.8,260.4 710.5,265.5 710.7,269 C710.9,272.5 710.7,275.4 713.3,278.4 C715.9,281.4 721.5,285.1 726.3,286.8 C731.1,288.6 736.8,288.7 742,288.9 C747.2,289.1 753.4,289.0 757.7,287.8 C762.1,286.6 765.9,284.2 768.1,281.6 C770.3,279.0 769.7,277.3 771,272 C772.3,266.7 777.8,256.7 776,250 C774.2,243.3 768.2,234.3 760,232 C751.8,229.7 733.1,233.8 727,236Z" fill="none" stroke="#000" stroke-width="1.2" stroke-linejoin="round"/><polygon points="770,109.7 774,100 790,88 808.7,175.3 806.8,190.7 808.7,194.6 811.6,202.3 815,214 750.8,212 756.6,200.4 764.3,190.7 775,132.8" fill="#00e6e6" stroke="#000" stroke-width="1.1" stroke-linejoin="round"/><polygon points="775,132.8 777.8,133.8 768,190.7 764.3,190.7" fill="#00b4bc" stroke="#000" stroke-width="0.9" stroke-linejoin="round"/><polygon points="764.3,190.7 768,190.7 775,196 752,215 750.8,212 756.6,200.4" fill="#00b8c0" stroke="#000" stroke-width="0" stroke-linejoin="round"/><polygon points="778.8,181 800,180 800,192.7 779.5,193.5" fill="#00e6e6" stroke="#000" stroke-width="1.1" stroke-linejoin="round"/><polyline points="779.5,187.5 800,186.5" fill="none" stroke="#000" stroke-width="0.9" stroke-linejoin="round"/><path d="M760,206.9 C763.8,202.6 768.4,200.9 773.5,199.3 C778.6,197.8 785.3,197.5 790.4,197.6 C795.5,197.7 800.2,198.4 803.9,200 C807.5,201.6 810.0,203.2 812.3,206.9 C814.5,210.6 815.7,217.5 817.4,222 C819.1,226.5 820.7,230.2 822.4,233.9 C824.1,237.6 826.1,240.3 827.5,244 C828.9,247.7 830.6,252.4 831,255.8 C831.4,259.2 831.2,261.2 830,264.3 C828.8,267.4 826.4,271.6 824,274.4 C821.6,277.2 819.3,279.3 815.7,281.1 C812.1,282.9 806.4,285.0 802.2,285.4 C798.0,285.8 794.6,285.3 790.4,283.7 C786.2,282.1 780.8,278.4 776.9,276 C773.0,273.6 770.1,272.4 766.8,269.3 C763.5,266.2 759.7,261.4 757.3,257.5 C754.9,253.6 753.4,251.1 752.3,245.7 C751.2,240.3 749.5,231.5 750.8,225 C752.1,218.5 756.2,211.2 760,206.9Z" fill="#c88ca6" stroke="#000" stroke-width="1.1" stroke-linejoin="round"/><polygon points="800,199 809,203 814,210 819,226 824,238 812,232 806,214" fill="#b8809a" stroke="#000" stroke-width="0" stroke-linejoin="round"/><path d="M765,247.4 C780,242 795,239 800.5,239 C810,239 818,239 820.8,240.6 L827.5,244 C830,250 831,256 831,258 C830,266 826,272 824,274.4 C818,280 810,284 802.2,285.4 C795,285 790,284 790.4,283.7 C784,280 778,278 776.9,276 C770,272 768,270 766.8,269.3 C760,262 758,258 757.3,257.5 Z" fill="#f0a6c8" stroke="#000" stroke-width="0" stroke-linejoin="round"/><path d="M760,233.9 C775,231 790,229.7 795.4,229.7 C805,229.7 812,231 815.7,232.2 L822.4,233.9" fill="none" stroke="#000" stroke-width="0.9" stroke-linejoin="round"/><path d="M765,247.4 C780,242 795,239 800.5,239 C810,239 818,239 820.8,240.6" fill="none" stroke="#000" stroke-width="0.9" stroke-linejoin="round"/><path d="M766.8,260.9 C780,257 795,253 805.6,252.4" fill="none" stroke="#000" stroke-width="0.9" stroke-linejoin="round"/><polyline points="773.5,201.8 793.8,242.3 800,256" fill="none" stroke="#000" stroke-width="0.9" stroke-linejoin="round"/><polyline points="790,199 803.9,230.5 808,240" fill="none" stroke="#000" stroke-width="0.9" stroke-linejoin="round"/><path d="M760,206.9 C763.8,202.6 768.4,200.9 773.5,199.3 C778.6,197.8 785.3,197.5 790.4,197.6 C795.5,197.7 800.2,198.4 803.9,200 C807.5,201.6 810.0,203.2 812.3,206.9 C814.5,210.6 815.7,217.5 817.4,222 C819.1,226.5 820.7,230.2 822.4,233.9 C824.1,237.6 826.1,240.3 827.5,244 C828.9,247.7 830.6,252.4 831,255.8 C831.4,259.2 831.2,261.2 830,264.3 C828.8,267.4 826.4,271.6 824,274.4 C821.6,277.2 819.3,279.3 815.7,281.1 C812.1,282.9 806.4,285.0 802.2,285.4 C798.0,285.8 794.6,285.3 790.4,283.7 C786.2,282.1 780.8,278.4 776.9,276 C773.0,273.6 770.1,272.4 766.8,269.3 C763.5,266.2 759.7,261.4 757.3,257.5 C754.9,253.6 753.4,251.1 752.3,245.7 C751.2,240.3 749.5,231.5 750.8,225 C752.1,218.5 756.2,211.2 760,206.9Z" fill="none" stroke="#000" stroke-width="1.2" stroke-linejoin="round"/><path d="M788.7,267.6 C789,258 797,252.4 807.3,252.4 C818,252.4 825,258 825,264.3 C825,275 816,284.5 807.3,284.5 C797,284.5 788.5,277 788.7,267.6 Z" fill="#e6b0b6" stroke="#000" stroke-width="1.1" stroke-linejoin="round"/><path d="M790.4,262.6 L822.4,272.7 C820,280 814,284.5 807.3,284.5 C797,284.5 788.5,277 788.7,267.6 Z" fill="#f0a6c8" stroke="#000" stroke-width="0" stroke-linejoin="round"/><polyline points="790.4,262.6 822.4,272.7" fill="none" stroke="#000" stroke-width="0.9" stroke-linejoin="round"/><path d="M788.7,267.6 C789,258 797,252.4 807.3,252.4 C818,252.4 825,258 825,264.3 C825,275 816,284.5 807.3,284.5 C797,284.5 788.5,277 788.7,267.6 Z" fill="none" stroke="#000" stroke-width="1.2" stroke-linejoin="round"/><path d="M725,236 C723,229 726,223 731,221 L748,215.8 L773.3,206 L779,222.6 L763.6,231 L740.5,240.7 C736,242 731,242.5 729,241.7 C727,240 725.5,238 725,236 Z" fill="#c88ca6" stroke="#000" stroke-width="1.3" stroke-linejoin="round"/><polyline points="773.3,206 781,204" fill="none" stroke="#000" stroke-width="0.9" stroke-linejoin="round"/><path d="M775,133 L770,118 C769,108 772,100 777,94 C782,89 790,86 800.6,85 L815,86 L800,100 L785,125 Z" fill="#00e6e6" stroke="#000" stroke-width="1.1" stroke-linejoin="round"/><path d="M777,130 L773,118 C773,110 776,102 780,97 C784,92 790,89 795,88" fill="none" stroke="#00a8b0" stroke-width="0.6" stroke-linejoin="round"/><path d="M791,89.6 C795,87 800,86 806,85.5 L891.7,84 L892,131.3 L851.8,133.3 L845,150.8 C840,160 835,168 828,171.3 C820,175 812,176 804,173.8 C797,171 792,168 789.4,159.8 L778.8,138.6 L775,122 C775,118 776,116 777,114 L791,89.6 Z" fill="#086e56" stroke="#000" stroke-width="1.1" stroke-linejoin="round"/><polygon points="801,111 891.7,103 892,131.3 851.8,133.3 848.8,120.7 842.7,114 833,112.8 807,119.5" fill="#0b876a" stroke="#000" stroke-width="1.0" stroke-linejoin="round"/><polyline points="820,106 891.7,102.5" fill="none" stroke="#000" stroke-width="0.9" stroke-linejoin="round"/><polyline points="791,90 801,111 786,135" fill="none" stroke="#000" stroke-width="0.9" stroke-linejoin="round"/><polyline points="818,88 825,103" fill="none" stroke="#000" stroke-width="0.9" stroke-linejoin="round"/><polyline points="801,112.5 891.7,104.5" fill="none" stroke="#000" stroke-width="0.7" stroke-linejoin="round"/><path d="M807,119.5 C813.7,117.2 827.0,113.7 833,112.8 C839.0,111.9 840.1,112.7 842.7,114 C845.3,115.3 847.3,118.2 848.8,120.7 C850.3,123.2 851.4,126.4 851.8,129 C852.2,131.6 852.3,132.8 851.2,136.4 C850.1,140.0 847.2,146.4 845,150.8 C842.8,155.2 840.8,159.6 838,163 C835.2,166.4 831.7,169.3 828,171.3 C824.3,173.3 820.0,174.6 816,175 C812.0,175.4 807.8,175.0 804,173.8 C800.2,172.6 795.8,170.3 793,167.7 C790.2,165.1 788.6,161.8 787,158 C785.4,154.2 783.8,148.6 783.6,144.8 C783.4,141.0 784.4,138.0 786,135 C787.6,132.0 789.5,129.3 793,126.7 C796.5,124.1 800.3,121.8 807,119.5Z" fill="#0b876a" stroke="#000" stroke-width="1.2" stroke-linejoin="round"/><path d="M807,119.5 C800,121 795,124 793,126.7 C789,130 786,133 786,135 C784,139 783.6,142 783.6,144.8 C784,150 785,155 787,158 C789,162 791,165 793,167.7 C797,171 801,173 804,173.8 C801,170 798,166 796,162 C793,156 791,149 791,143 C792,136 796,130 800,126 C803,123 805,121 807,119.5 Z" fill="#0a7a60" stroke="#000" stroke-width="0" stroke-linejoin="round"/><polygon points="833,112.8 842.7,114 848.8,120.7 851.8,129 851.2,136.4 845,150.8 839,135" fill="#0a7c62" stroke="#000" stroke-width="0" stroke-linejoin="round"/><path d="M786,135 C795,131 805,129 812.6,128.5 C825,126 836.7,123 850,122.5" fill="none" stroke="#000" stroke-width="0.9" stroke-linejoin="round"/><path d="M783.6,144.8 C790,138 800,134 808,131" fill="none" stroke="#000" stroke-width="0.8" stroke-linejoin="round"/><polyline points="817,141 851,135" fill="none" stroke="#000" stroke-width="0.9" stroke-linejoin="round"/><polyline points="808,120.7 816,142.4" fill="none" stroke="#000" stroke-width="0.9" stroke-linejoin="round"/><polyline points="833.7,113.4 839,135 845,150.8" fill="none" stroke="#000" stroke-width="0.9" stroke-linejoin="round"/><path d="M787,158 C790,150 796,144 804,141" fill="none" stroke="#000" stroke-width="0.8" stroke-linejoin="round"/><path d="M807,119.5 C813.7,117.2 827.0,113.7 833,112.8 C839.0,111.9 840.1,112.7 842.7,114 C845.3,115.3 847.3,118.2 848.8,120.7 C850.3,123.2 851.4,126.4 851.8,129 C852.2,131.6 852.3,132.8 851.2,136.4 C850.1,140.0 847.2,146.4 845,150.8 C842.8,155.2 840.8,159.6 838,163 C835.2,166.4 831.7,169.3 828,171.3 C824.3,173.3 820.0,174.6 816,175 C812.0,175.4 807.8,175.0 804,173.8 C800.2,172.6 795.8,170.3 793,167.7 C790.2,165.1 788.6,161.8 787,158 C785.4,154.2 783.8,148.6 783.6,144.8 C783.4,141.0 784.4,138.0 786,135 C787.6,132.0 789.5,129.3 793,126.7 C796.5,124.1 800.3,121.8 807,119.5Z" fill="none" stroke="#000" stroke-width="1.2" stroke-linejoin="round"/><path d="M800,160 C800,148 808,141 817,141 C828,141 836,147 836,155 C836,166 828,175 816,175 C806,175 800,168 800,160 Z" fill="#0e8e72" stroke="#000" stroke-width="1.1" stroke-linejoin="round"/><polyline points="802,164 835,151" fill="none" stroke="#000" stroke-width="0.9" stroke-linejoin="round"/><polygon points="874.6,87.5 886.7,87 887,99 875,99.5" fill="#0a5848" stroke="#000" stroke-width="0.9" stroke-linejoin="round"/><polyline points="877,91 886,90.5" fill="none" stroke="#000" stroke-width="0.8" stroke-linejoin="round"/><polyline points="877,95 886,94.5" fill="none" stroke="#000" stroke-width="0.8" stroke-linejoin="round"/><polygon points="886.7,84.5 932,83.8 939.4,102.5 892,103.5" fill="#c8a48a" stroke="#000" stroke-width="1.1" stroke-linejoin="round"/><polygon points="886.7,84.5 892,84.4 898,102.5 892,103.5" fill="#d8b498" stroke="#000" stroke-width="0.9" stroke-linejoin="round"/><polyline points="889.5,85 895.5,103" fill="none" stroke="#000" stroke-width="0.8" stroke-linejoin="round"/><polyline points="892.5,85 898.5,103" fill="none" stroke="#000" stroke-width="0.8" stroke-linejoin="round"/><path d="M932,83.8 L937,82.5 L943,82.8 L944,84.5 L972,85.2 C976,88 977,96 976,101.5 L939.4,102.5 Z" fill="#e6b0b0" stroke="#000" stroke-width="1.1" stroke-linejoin="round"/><polyline points="937,84.5 944,84.5" fill="none" stroke="#000" stroke-width="0.8" stroke-linejoin="round"/><polyline points="938,88 946,100" fill="none" stroke="#000" stroke-width="0.8" stroke-linejoin="round"/><polyline points="943,86 947,95 951,88" fill="none" stroke="#000" stroke-width="0.8" stroke-linejoin="round"/><path d="M947,99 C949,91 956,87 966,87.5 C972,88 975,92 975.5,96" fill="none" stroke="#000" stroke-width="0.8" stroke-linejoin="round"/><polygon points="892,102.5 978,102.5 979.5,110.2 893,110.2" fill="#f6d0b0" stroke="#000" stroke-width="1.1" stroke-linejoin="round"/><path d="M893,110.2 L978,110.2 C981,112 982.5,118 982,123 C981,126 979,127 977,127.5 L889,133 Z" fill="#e6b0b0" stroke="#000" stroke-width="1.1" stroke-linejoin="round"/><polygon points="977,110.5 979,110.5 982,116 981,124 978,127" fill="#f0c4a8" stroke="#000" stroke-width="0" stroke-linejoin="round"/><path d="M893,110.2 L978,110.2 C981,112 982.5,118 982,123 C981,126 979,127 977,127.5 L889,133 Z" fill="none" stroke="#000" stroke-width="1.1" stroke-linejoin="round"/><polyline points="893,110.2 889,133" fill="none" stroke="#000" stroke-width="0.9" stroke-linejoin="round"/><polyline points="897,110.2 893,132.5" fill="none" stroke="#000" stroke-width="0.8" stroke-linejoin="round"/><polygon points="906.6,115 909,112.6 941.4,112.6 941.4,131 938,133.8 908,133.8" fill="#d8b498" stroke="#000" stroke-width="1.0" stroke-linejoin="round"/><polygon points="912.4,116.5 937.5,116.5 937.5,133.8 912.4,133.8" fill="#e6b0b0" stroke="#000" stroke-width="1.0" stroke-linejoin="round"/><polyline points="909,112.6 912.4,116.5" fill="none" stroke="#000" stroke-width="0.8" stroke-linejoin="round"/><polyline points="941.4,112.6 937.5,116.5" fill="none" stroke="#000" stroke-width="0.8" stroke-linejoin="round"/></g></svg>
<svg class="a" style="left:1200px;top:70px" width="70" height="50"><path d="M19.5 46h31" stroke="#e00000"/><path d="M19.5 46l-8-17" stroke="#00c000"/><path d="M19.5 46l5-26" stroke="#00c8d8"/><g font-family="Liberation Sans" font-size="16" fill="#000"><text x="25.6" y="18.5" textLength="8" lengthAdjust="spacingAndGlyphs">H</text><text x="11" y="28" textLength="11.5" lengthAdjust="spacingAndGlyphs">W</text><text x="19" y="46" textLength="11" lengthAdjust="spacingAndGlyphs">W</text><text x="51.6" y="46" textLength="5.5" lengthAdjust="spacingAndGlyphs">L</text></g></svg>
<div class="hl" style="left:0;top:404px;width:1284px;background:#a4a4a4"></div>
<div class="hl" style="left:0;top:422px;width:1284px;background:#a4a4a4"></div>
<span class="t fit" style="left:0px;top:406px;width:90px;">ガントチャートパネル</span>
<svg class="a" style="left:1256px;top:407px" width="10" height="11" viewBox="0 0 10 11"><path d="M2 1h6M3 1v5h4V1M1 6h8M5 6v4" stroke="#000" stroke-width="1.3" fill="none"/></svg>
<svg class="a" style="left:1271px;top:408px" width="9" height="9" viewBox="0 0 9 9"><path d="M1 1l7 7M8 1l-7 7" stroke="#000" stroke-width="1.6"/></svg>
<svg class="a" style="left:313px;top:437px" width="16" height="16" viewBox="0 0 16 16"><rect x="0.5" y="0.5" width="15" height="15" fill="#78e078" stroke="#111"/><path d="M2 13l9-9 2 2-9 9z" fill="#9ab8e0"/><path d="M2 13l-1 2 2-.5z" fill="#f0c090"/><circle cx="11" cy="11" r="2.6" fill="none" stroke="#f01010" stroke-width="1.4"/><path d="M9 13l4-4" stroke="#f01010" stroke-width="1.2"/></svg>
<svg class="a" style="left:332px;top:437px" width="16" height="16" viewBox="0 0 16 16"><rect x="0.5" y="0.5" width="15" height="15" fill="#fff" stroke="#111"/><path d="M2 13l9-9 2 2-9 9z" fill="#9ab8e0" stroke="#6a88b8" stroke-width=".5"/><path d="M2 13l-1 2 2-.5z" fill="#f0c090"/></svg>
<svg class="a" style="left:817px;top:439px" width="16" height="16" viewBox="0 0 16 16"><path d="M3.5 1.5v13l10-6.5z" fill="#4a70c0" stroke="#3a5aa0"/></svg>
<svg class="a" style="left:844px;top:439px" width="16" height="16" viewBox="0 0 16 16"><rect x="1.5" y="1.5" width="12" height="12" fill="#e08080" stroke="#c83030"/></svg>
<svg class="a" style="left:872px;top:438px" width="16" height="16" viewBox="0 0 16 16"><rect x="1" y="4" width="14" height="11" rx="2" fill="#7a98c8" stroke="#2a4a8a"/><rect x="4" y="1" width="8" height="4" fill="#a8c0e0" stroke="#2a4a8a"/><circle cx="6" cy="10" r="3.5" fill="#c0d4f0" stroke="#2a4a8a"/><circle cx="6" cy="10" r="1.5" fill="#2a4a8a"/></svg>
<span class="t fit" style="left:907px;top:440px;width:48px;">現在時間</span>
<div class="a" style="left:961px;top:437px;width:70px;height:18px;border:1px solid #7a7a7a;background:#fff"></div>
<span class="t" style="left:966px;top:440px;">0</span>
<span class="t" style="left:1041px;top:440px;">/</span>
<span class="t fit" style="left:1055px;top:440px;color:#909090;width:48px;">最大時間</span>
<div class="a" style="left:1108px;top:437px;width:70px;height:18px;border:1px solid #c4c4c4;background:#f8f8f8"></div>
<span class="t" style="left:1113px;top:440px;color:#909090;">90</span>
<span class="t fit" style="left:1186px;top:440px;width:12px;">秒</span>
<svg class="a" style="left:1212px;top:438px" width="16" height="16" viewBox="0 0 16 16"><circle cx="6" cy="6" r="4.5" fill="#e8f0fa" stroke="#4a70b8" stroke-width="1.4"/><path d="M9 9l6 6" stroke="#4a80d0" stroke-width="2.2"/><path d="M1 13h5M3.5 10.5v5" stroke="#111" stroke-width="1.5"/></svg>
<svg class="a" style="left:1234px;top:438px" width="16" height="16" viewBox="0 0 16 16"><circle cx="6" cy="6" r="4.5" fill="#e8f0fa" stroke="#4a70b8" stroke-width="1.4"/><path d="M9 9l6 6" stroke="#4a80d0" stroke-width="2.2"/><path d="M1 13h5" stroke="#111" stroke-width="1.5"/></svg>
<svg class="a" style="left:1256px;top:438px" width="16" height="16" viewBox="0 0 16 16"><rect x="0.5" y="0.5" width="15" height="15" fill="#e8f0fa" stroke="#3a5ab0"/><circle cx="4" cy="5" r="1.8" fill="none" stroke="#3a5ab0"/><circle cx="4" cy="11" r="1.8" fill="none" stroke="#3a5ab0"/><path d="M7 5h6M7 11h6" stroke="#3a5ab0" stroke-width="1.5"/></svg>
<div class="a" style="left:8px;top:459px;width:298px;height:156px;border:1px solid #8e96a4"></div>
<div class="a" style="left:308px;top:459px;width:3px;height:156px;background:linear-gradient(90deg,#f8f8f8 0,#f8f8f8 .5px,#5a5a5a 1px,#5a5a5a 2px,#f8f8f8 2px)"></div>
<div class="a" style="left:312px;top:459px;width:955px;height:156px;border:1px solid #8e96a4"></div>
<div class="vl" style="left:108px;top:463px;height:20px;background:#a0a0a0"></div>
<div class="vl" style="left:148px;top:463px;height:20px;background:#a0a0a0"></div>
<div class="vl" style="left:198px;top:463px;height:20px;background:#a0a0a0"></div>
<div class="vl" style="left:278px;top:463px;height:20px;background:#a0a0a0"></div>
<div class="vl" style="left:302px;top:463px;height:20px;background:#a0a0a0"></div>
<div class="a" style="left:9px;top:484px;width:296px;height:2px;background:#a0a0a0"></div>
<div class="a" style="left:313px;top:484px;width:953px;height:2px;background:#a0a0a0"></div>
<div class="hl" style="left:9px;top:581px;width:296px"></div>
<div class="hl" style="left:313px;top:581px;width:953px"></div>
<span class="t fit" style="left:16px;top:466px;width:47px;">項目一覧</span>
<span class="t fit" style="left:116px;top:466px;width:23px;">機構</span>
<span class="t fit" style="left:161px;top:466px;width:23px;">展開</span>
<span class="t fit" style="left:207px;top:466px;width:20px;">A/P</span>
<span class="t fit" style="left:14px;top:486px;width:78px;">設備: RV-18SQ</span>
<span class="t fit" style="left:207px;top:486px;width:38px;">Passive</span>
<span class="t fit" style="left:106px;top:502px;width:43px;">設備: R..</span>
<span class="t fit" style="left:207px;top:502px;width:32px;">Active</span>
<span class="t fit" style="left:112px;top:518px;width:30px;">機構1</span>
<span class="t fit" style="left:207px;top:518px;width:32px;">Active</span>
<span class="t fit" style="left:112px;top:534px;width:30px;">機構2</span>
<span class="t fit" style="left:207px;top:534px;width:32px;">Active</span>
<span class="t fit" style="left:112px;top:550px;width:30px;">機構3</span>
<span class="t fit" style="left:207px;top:550px;width:32px;">Active</span>
<span class="t fit" style="left:112px;top:566px;width:30px;">機構4</span>
<span class="t fit" style="left:207px;top:566px;width:32px;">Active</span>
<span class="t fit" style="left:167px;top:502px;width:13px;">[-]</span>
<svg class="a" style="left:312px;top:459px" width="954" height="27"><g font-family="Liberation Sans" font-size="11.5" fill="#000" letter-spacing="0.5"><text x="28.5" y="18" text-anchor="middle">1.0</text><text x="56.5" y="18" text-anchor="middle">2.0</text><text x="84.5" y="18" text-anchor="middle">3.0</text><text x="112.5" y="18" text-anchor="middle">4.0</text><text x="140.5" y="18" text-anchor="middle">5.0</text><text x="168.5" y="18" text-anchor="middle">6.0</text><text x="196.5" y="18" text-anchor="middle">7.0</text><text x="224.5" y="18" text-anchor="middle">8.0</text><text x="252.5" y="18" text-anchor="middle">9.0</text><text x="280.5" y="18" text-anchor="middle">10.0</text><text x="308.5" y="18" text-anchor="middle">11.0</text><text x="336.5" y="18" text-anchor="middle">12.0</text><text x="364.5" y="18" text-anchor="middle">13.0</text><text x="392.5" y="18" text-anchor="middle">14.0</text><text x="420.5" y="18" text-anchor="middle">15.0</text><text x="448.5" y="18" text-anchor="middle">16.0</text><text x="476.5" y="18" text-anchor="middle">17.0</text><text x="504.5" y="18" text-anchor="middle">18.0</text><text x="532.5" y="18" text-anchor="middle">19.0</text><text x="560.5" y="18" text-anchor="middle">20.0</text><text x="588.5" y="18" text-anchor="middle">21.0</text><text x="616.5" y="18" text-anchor="middle">22.0</text><text x="644.5" y="18" text-anchor="middle">23.0</text><text x="672.5" y="18" text-anchor="middle">24.0</text><text x="700.5" y="18" text-anchor="middle">25.0</text><text x="728.5" y="18" text-anchor="middle">26.0</text><text x="756.5" y="18" text-anchor="middle">27.0</text><text x="784.5" y="18" text-anchor="middle">28.0</text><text x="812.5" y="18" text-anchor="middle">29.0</text><text x="840.5" y="18" text-anchor="middle">30.0</text><text x="868.5" y="18" text-anchor="middle">31.0</text><text x="896.5" y="18" text-anchor="middle">32.0</text><text x="924.5" y="18" text-anchor="middle">33.0</text><text x="952.5" y="18" text-anchor="middle">34.0</text></g><path d="M14.5 22v3" stroke="#909090"/><path d="M28.5 19v6" stroke="#909090"/><path d="M42.5 22v3" stroke="#909090"/><path d="M56.5 19v6" stroke="#909090"/><path d="M70.5 22v3" stroke="#909090"/><path d="M84.5 19v6" stroke="#909090"/><path d="M98.5 22v3" stroke="#909090"/><path d="M112.5 19v6" stroke="#909090"/><path d="M126.5 22v3" stroke="#909090"/><path d="M140.5 19v6" stroke="#909090"/><path d="M154.5 22v3" stroke="#909090"/><path d="M168.5 19v6" stroke="#909090"/><path d="M182.5 22v3" stroke="#909090"/><path d="M196.5 19v6" stroke="#909090"/><path d="M210.5 22v3" stroke="#909090"/><path d="M224.5 19v6" stroke="#909090"/><path d="M238.5 22v3" stroke="#909090"/><path d="M252.5 19v6" stroke="#909090"/><path d="M266.5 22v3" stroke="#909090"/><path d="M280.5 19v6" stroke="#909090"/><path d="M294.5 22v3" stroke="#909090"/><path d="M308.5 19v6" stroke="#909090"/><path d="M322.5 22v3" stroke="#909090"/><path d="M336.5 19v6" stroke="#909090"/><path d="M350.5 22v3" stroke="#909090"/><path d="M364.5 19v6" stroke="#909090"/><path d="M378.5 22v3" stroke="#909090"/><path d="M392.5 19v6" stroke="#909090"/><path d="M406.5 22v3" stroke="#909090"/><path d="M420.5 19v6" stroke="#909090"/><path d="M434.5 22v3" stroke="#909090"/><path d="M448.5 19v6" stroke="#909090"/><path d="M462.5 22v3" stroke="#909090"/><path d="M476.5 19v6" stroke="#909090"/><path d="M490.5 22v3" stroke="#909090"/><path d="M504.5 19v6" stroke="#909090"/><path d="M518.5 22v3" stroke="#909090"/><path d="M532.5 19v6" stroke="#909090"/><path d="M546.5 22v3" stroke="#909090"/><path d="M560.5 19v6" stroke="#909090"/><path d="M574.5 22v3" stroke="#909090"/><path d="M588.5 19v6" stroke="#909090"/><path d="M602.5 22v3" stroke="#909090"/><path d="M616.5 19v6" stroke="#909090"/><path d="M630.5 22v3" stroke="#909090"/><path d="M644.5 19v6" stroke="#909090"/><path d="M658.5 22v3" stroke="#909090"/><path d="M672.5 19v6" stroke="#909090"/><path d="M686.5 22v3" stroke="#909090"/><path d="M700.5 19v6" stroke="#909090"/><path d="M714.5 22v3" stroke="#909090"/><path d="M728.5 19v6" stroke="#909090"/><path d="M742.5 22v3" stroke="#909090"/><path d="M756.5 19v6" stroke="#909090"/><path d="M770.5 22v3" stroke="#909090"/><path d="M784.5 19v6" stroke="#909090"/><path d="M798.5 22v3" stroke="#909090"/><path d="M812.5 19v6" stroke="#909090"/><path d="M826.5 22v3" stroke="#909090"/><path d="M840.5 19v6" stroke="#909090"/><path d="M854.5 22v3" stroke="#909090"/><path d="M868.5 19v6" stroke="#909090"/><path d="M882.5 22v3" stroke="#909090"/><path d="M896.5 19v6" stroke="#909090"/><path d="M910.5 22v3" stroke="#909090"/><path d="M924.5 19v6" stroke="#909090"/><path d="M938.5 22v3" stroke="#909090"/></svg>
<div class="a" style="left:313px;top:486px;width:2px;height:111px;background:#ff0000"></div>
<svg class="a" style="left:312px;top:459px" width="954" height="156"><rect x="28.5" y="58.5" width="140.0" height="16" fill="#5b9bd5" stroke="#000"/><rect x="126.5" y="74.5" width="154.0" height="16" fill="#5b9bd5" stroke="#000"/><rect x="224.5" y="90.5" width="140.0" height="16" fill="#5b9bd5" stroke="#000"/><rect x="308.5" y="106.5" width="154.0" height="16" fill="#5b9bd5" stroke="#000"/><circle cx="28.5" cy="66.5" r="3.5" fill="#fff" stroke="#000"/><circle cx="168.5" cy="66.5" r="3.5" fill="#fff" stroke="#000"/><circle cx="126.5" cy="82.5" r="3.5" fill="#fff" stroke="#000"/><circle cx="280.5" cy="82.5" r="3.5" fill="#fff" stroke="#000"/><circle cx="224.5" cy="98.5" r="3.5" fill="#fff" stroke="#000"/><circle cx="364.5" cy="98.5" r="3.5" fill="#fff" stroke="#000"/><circle cx="308.5" cy="114.5" r="3.5" fill="#fff" stroke="#000"/><circle cx="462.5" cy="114.5" r="3.5" fill="#fff" stroke="#000"/></svg>
<svg class="a" style="left:317px;top:600px" width="8" height="11"><path d="M6 1.5L2 5.5l4 4" stroke="#505050" stroke-width="1.6" fill="none"/></svg>
<div class="a" style="left:330px;top:598px;width:341px;height:15px;background:#cdcdcd"></div>
<svg class="a" style="left:1254px;top:600px" width="8" height="11"><path d="M2 1.5l4 4-4 4" stroke="#505050" stroke-width="1.6" fill="none"/></svg>
<script>
(function(){var els=document.querySelectorAll('.fit');for(var i=0;i<els.length;i++){var e=els[i];var w=parseFloat(e.style.width);e.style.width='auto';var r=e.getBoundingClientRect().width;if(r>0){e.style.transform='scaleX('+(w/r)+')';}}})();
</script>
</body></html>
